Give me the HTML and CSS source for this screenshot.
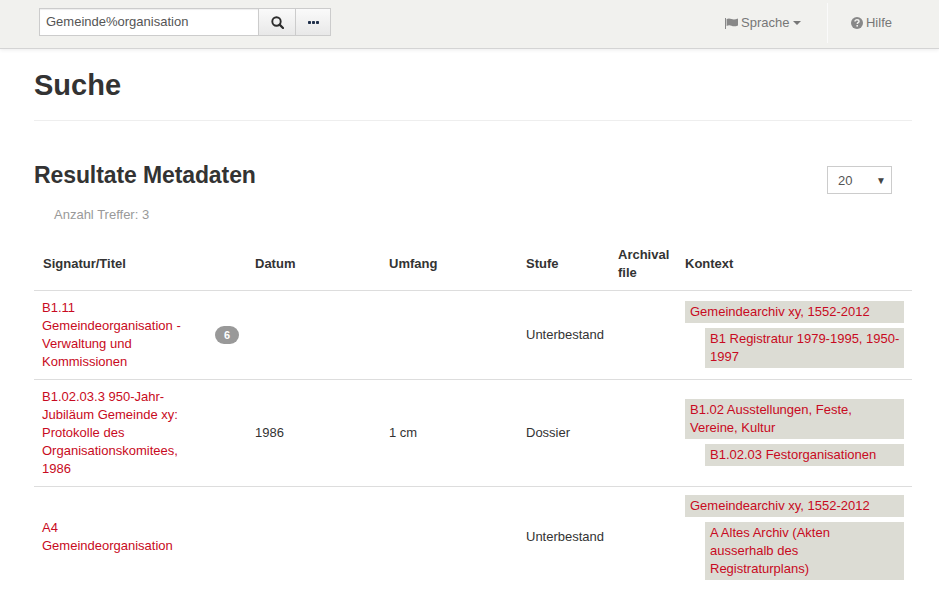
FILE: index.html
```html
<!DOCTYPE html>
<html lang="de">
<head>
<meta charset="utf-8">
<title>Suche</title>
<link rel="stylesheet" href="styles.css">
</head>
<body>
<header class="navbar">
  <form class="search">
    <input class="search-input" type="text" value="Gemeinde%organisation">
    <button class="btn btn-search" type="button" aria-label="Suchen">
      <svg width="13" height="13" viewBox="0 0 13 13"><circle cx="5.500" cy="5.500" r="4.200" fill="none" stroke="#2c2c2c" stroke-width="1.900"/><path d="M8.600 8.600 12 12" stroke="#2c2c2c" stroke-width="2.200" stroke-linecap="round"/></svg>
    </button>
    <button class="btn btn-more" type="button" aria-label="Mehr">
      <svg width="11" height="3" viewBox="0 0 11 3"><g fill="#1f2f4a"><rect width="3" height="3" rx=".8"/><rect x="4" width="3" height="3" rx=".8"/><rect x="8" width="3" height="3" rx=".8"/></g></svg>
    </button>
  </form>
  <nav class="nav-right">
    <a class="nav-item nav-lang">
      <svg width="13" height="11" viewBox="0 0 13 11"><path d="M0 0h1v11H0zM1.600 1C3.500 0 5 .4 6.500 1S10 1.700 13 .6V7.500C10 8.700 8 8.400 6.500 7.800S3.500 7 1.600 8z" fill="#888"/></svg>
      Sprache
      <span class="caret"></span>
    </a>
    <a class="nav-item nav-help">
      <svg width="12" height="12" viewBox="0 0 12 12"><circle cx="6" cy="6" r="6" fill="#888"/><path d="M4 4.600C4 3.400 4.900 2.800 6 2.800S8 3.500 8 4.500 6.700 5.700 6.400 6.300V7" fill="none" stroke="#f1f1ee" stroke-width="1.500"/><rect x="5.400" y="8" width="1.600" height="1.600" fill="#f1f1ee"/></svg>
      Hilfe
    </a>
  </nav>
</header>
<main class="content">
  <h1 class="page-title">Suche</h1>
  <section class="results">
    <div class="results-head">
      <h2 class="results-title">Resultate Metadaten</h2>
      <div class="page-size"><span>20</span><span class="page-size-arrow">▼</span></div>
    </div>
    <p class="hit-count">Anzahl Treffer: 3</p>
    <table class="table">
      <colgroup>
        <col class="c-title"><col class="c-date"><col class="c-extent"><col class="c-level"><col class="c-file"><col class="c-context">
      </colgroup>
      <thead>
        <tr><th class="th-first">Signatur/Titel</th><th>Datum</th><th>Umfang</th><th>Stufe</th><th>Archival file</th><th>Kontext</th></tr>
      </thead>
      <tbody>
        <tr class="row-a">
          <td class="td-title"><div class="title-wrap"><a class="link title-link">B1.11<br>Gemeindeorganisation - Verwaltung und Kommissionen</a><span class="badge">6</span></div></td>
          <td></td><td></td><td>Unterbestand</td><td></td>
          <td><a class="ctx link">Gemeindearchiv xy, 1552-2012</a><a class="ctx ctx-sub link">B1 Registratur 1979-1995, 1950-1997</a></td>
        </tr>
        <tr class="row-b">
          <td class="td-title"><a class="link title-link">B1.02.03.3 950-Jahr-Jubiläum Gemeinde xy: Protokolle des Organisationskomitees, 1986</a></td>
          <td>1986</td><td>1 cm</td><td>Dossier</td><td></td>
          <td><a class="ctx link">B1.02 Ausstellungen, Feste, Vereine, Kultur</a><a class="ctx ctx-sub link">B1.02.03 Festorganisationen</a></td>
        </tr>
        <tr class="row-c">
          <td class="td-title"><a class="link title-link">A4<br>Gemeindeorganisation</a></td>
          <td></td><td></td><td>Unterbestand</td><td></td>
          <td><a class="ctx link">Gemeindearchiv xy, 1552-2012</a><a class="ctx ctx-sub link">A Altes Archiv (Akten<br>ausserhalb des<br>Registraturplans)</a></td>
        </tr>
      </tbody>
    </table>
  </section>
</main>
</body>
</html>
```
FILE: styles.css
```css
* { box-sizing: border-box; }
html, body { margin: 0; padding: 0; height: 604px; overflow: hidden; }
body {
  font-family: "Liberation Sans", Arial, sans-serif;
  font-size: 13px;
  line-height: 18px;
  color: #333;
  background: #fff;
}
.navbar {
  height: 49px;
  background: #f1f1ee;
  border-bottom: 1px solid #d4d4d4;
  box-shadow: 0 1px 4px rgba(0,0,0,.08);
  display: flex;
  justify-content: space-between;
  padding-left: 39px;
}
.search { display: flex; height: 28px; margin-top: 8px; }
.search-input {
  width: 219px;
  height: 28px;
  padding: 0 6px 2px;
  border: 1px solid #ccc;
  border-right: 0;
  font: inherit;
  color: #555;
  background: #fff;
  box-shadow: inset 0 1px 1px rgba(0,0,0,.07);
  outline: none;
}
.btn {
  display: flex;
  align-items: center;
  justify-content: center;
  height: 28px;
  padding: 0;
  border: 1px solid #ccc;
  background: linear-gradient(#fafafa, #e8e8e8);
}
.btn-search { width: 38px; }
.btn-more { width: 35px; border-left: 0; }
.nav-right { display: flex; height: 44px; margin-top: 3px; padding-right: 47px; }
.nav-item { display: flex; align-items: center; gap: 3px; color: #777; height: 40px; }
.nav-lang { width: 103px; border-right: 1px solid #fafafa; }
.nav-help { padding-left: 23px; }
.caret {
  width: 0; height: 0;
  margin-left: 1px;
  border-left: 4px solid transparent;
  border-right: 4px solid transparent;
  border-top: 4px solid #777;
}
.content { padding: 0 27px 0 34px; }
.page-title {
  margin: 0;
  height: 72px;
  padding-top: 19px;
  font-size: 29px;
  line-height: 34px;
  font-weight: 700;
  border-bottom: 1px solid #eee;
}
.results-head { display: flex; justify-content: space-between; margin-top: 40px; height: 42px; }
.results-title { margin: 0; font-size: 23px; line-height: 28px; font-weight: 700; letter-spacing: -0.1px; }
.page-size {
  display: flex;
  justify-content: space-between;
  align-items: center;
  width: 65px;
  height: 28px;
  margin-top: 5px;
  margin-right: 20px;
  padding: 2px 5px 0 10px;
  border: 1px solid #ccc;
  color: #555;
}
.page-size-arrow { font-size: 10px; color: #444; }
.hit-count { margin: 0 0 0 20px; height: 33px; padding-top: 3px; color: #999; }
.table { width: 878px; border-collapse: collapse; table-layout: fixed; }
.c-title { width: 221px; }
.c-date { width: 134px; }
.c-extent { width: 137px; }
.c-level { width: 92px; }
.c-file { width: 67px; }
.c-context { width: 227px; }
th {
  text-align: left;
  font-weight: 700;
  padding: 10px 8px 7px 0;
  vertical-align: middle;
  border-bottom: 1px solid #ddd;
  height: 54px;
}
.th-first { padding-left: 9px; }
td { padding: 8px 8px 8px 0; vertical-align: middle; border-bottom: 1px solid #ddd; }
.row-c td { border-bottom: 0; }
.td-title { padding-left: 8px; }
.title-wrap { display: flex; align-items: center; justify-content: space-between; padding-right: 8px; }
.title-link { display: block; width: 150px; }
.link { color: #c80a22; }
.badge {
  width: 24px;
  height: 18px;
  border-radius: 10px;
  background: #999;
  color: #fff;
  font-size: 11px;
  font-weight: 700;
  line-height: 18px;
  text-align: center;
  flex: none;
}
.ctx { display: block; padding: 2px 3px 2px 5px; background: #dcdcd4; }
.ctx-sub { margin-top: 5px; margin-left: 20px; }
```
